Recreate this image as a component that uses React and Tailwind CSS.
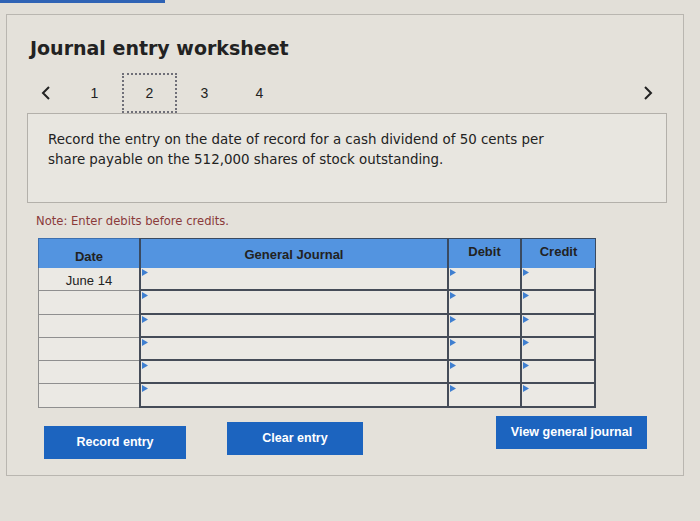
import React from "react";

const Tri = () => (
  <svg className="absolute left-[1px] top-[1px]" width="6" height="7" viewBox="0 0 6 7">
    <path d="M0 0 L6 3.5 L0 7 Z" fill="#3f7fd0" />
  </svg>
);

export default function App() {
  const rows = ["June 14", "", "", "", "", ""];
  return (
    <div className="w-[700px] h-[521px] bg-[#e2dfd8] overflow-hidden relative" style={{ fontFamily: "'DejaVu Sans', sans-serif" }}>
      <div className="h-[3px] w-[165px] bg-[#2f63b5]" />
      <div className="mt-[11px] ml-[6px] w-[678px] h-[462px] border border-[#b9b6b0] bg-[#e4e1da] flex flex-col">
        <h1 className="ml-[23px] mt-[21px] text-[19px] leading-[24px] font-bold text-[#222]" style={{ fontFamily: "'DejaVu Sans', sans-serif" }}>
          Journal entry worksheet
        </h1>
        <div className="flex items-center h-[40px] mt-[13px] text-[14px] text-[#222]" style={{ fontFamily: "'Liberation Sans', Arial, sans-serif" }}>
          <div className="w-[60px] flex justify-end pr-[16px]">
            <svg width="10" height="16" viewBox="0 0 10 16"><path d="M8 2 L2 8 L8 14" stroke="#222" strokeWidth="2" fill="none" /></svg>
          </div>
          <div className="w-[55px] text-center">1</div>
          <div className="w-[55px] h-[40px] border-2 border-dotted border-[#6f6f78] flex items-center justify-center">2</div>
          <div className="w-[55px] text-center">3</div>
          <div className="w-[55px] text-center">4</div>
          <div className="flex-1 flex justify-end pr-[30px]">
            <svg width="10" height="16" viewBox="0 0 10 16"><path d="M2 2 L8 8 L2 14" stroke="#222" strokeWidth="2" fill="none" /></svg>
          </div>
        </div>
        <div className="ml-[20px] w-[640px] h-[90px] border border-[#b3b0aa] bg-[#e8e6e0] pl-[20px] pt-[16px] text-[13.4px] leading-[20px] text-[#222]">
          <p>Record the entry on the date of record for a cash dividend of 50 cents per</p>
          <p>share payable on the 512,000 shares of stock outstanding.</p>
        </div>
        <p className="ml-[29px] mt-[11px] text-[11.6px] leading-[14px] text-[#8a3a3a]">Note: Enter debits before credits.</p>
        <div className="ml-[31px] mt-[10px] w-[558px] grid grid-cols-[101px_308px_73px_76px] text-[13px] text-[#222]" style={{ fontFamily: "'Liberation Sans', Arial, sans-serif" }}>
          <div className="h-[30px] bg-[#5394e0] border-l border-t border-[#3d6fae] flex items-center justify-center font-bold pt-[6px]">Date</div>
          <div className="h-[30px] bg-[#5394e0] border-l-2 border-t border-[#3a4a60] flex items-center justify-center font-bold pt-[2px]">General Journal</div>
          <div className="h-[30px] bg-[#5394e0] border-l-2 border-t border-[#3a4a60] flex items-center justify-center font-bold pb-[4px]">Debit</div>
          <div className="h-[30px] bg-[#5394e0] border-l-2 border-r border-t border-[#3a4a60] flex items-center justify-center font-bold pb-[4px]">Credit</div>
          {rows.map((r, i) => (
            <React.Fragment key={i}>
              <div className="h-[23.3px] bg-[#ebe9e4] border-l border-b border-[#8f8f8f] flex items-center justify-center text-[13px] pt-[4px]">{r}</div>
              <div className="relative h-[23.3px] bg-[#ebe9e4] border-l-2 border-b-2 border-[#454c58]"><Tri /></div>
              <div className="relative h-[23.3px] bg-[#ebe9e4] border-l-2 border-b-2 border-[#454c58]"><Tri /></div>
              <div className="relative h-[23.3px] bg-[#ebe9e4] border-l-2 border-r-2 border-b-2 border-[#454c58]"><Tri /></div>
            </React.Fragment>
          ))}
        </div>
        <div className="flex items-start text-white font-bold text-[12.5px]" style={{ fontFamily: "'Liberation Sans', Arial, sans-serif" }}>
          <button className="ml-[37px] mt-[18px] w-[142px] h-[33px] bg-[#1c64bf] flex items-center justify-center">Record entry</button>
          <button className="ml-[41px] mt-[14px] w-[136px] h-[33px] bg-[#1c64bf] flex items-center justify-center">Clear entry</button>
          <button className="ml-[133px] mt-[8px] w-[151px] h-[33px] bg-[#1c64bf] flex items-center justify-center">View general journal</button>
        </div>
      </div>
    </div>
  );
}
